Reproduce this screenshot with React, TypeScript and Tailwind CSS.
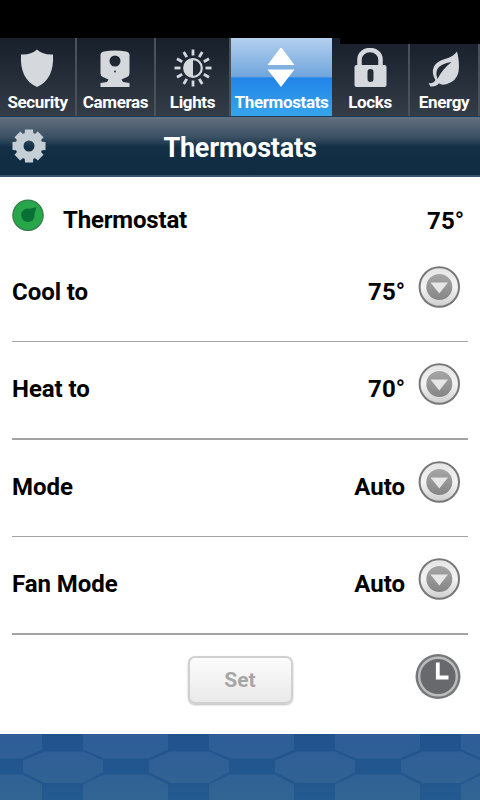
import type { ReactNode } from "react";

function ShieldIcon() {
  return (
    <svg className="h-10 w-10" viewBox="0 0 40 40">
      <path d="M19 1.500C15 5.500 9 7 3 6.500C2 22 7 34 19 39C31 34 36 22 35 6.500C29 7 23 5.500 19 1.500Z" fill="#d5d9dd" />
    </svg>
  );
}

function CameraIcon() {
  return (
    <svg className="h-10 w-10" viewBox="0 0 40 40">
      <path
        fillRule="evenodd"
        fill="#d5d9dd"
        d="M8 3.500Q19 1.500 30 3.500Q33.500 4 33.500 7V25Q33.500 28.500 30 29.500L25.500 31.500L27 34L33.500 35V39H4.500V35L11 34L12.500 31.500L8 29.500Q4.500 28.500 4.500 25V7Q4.500 4 8 3.500ZM19 7.500A5.500 5.500 0 1 0 19 18.500A5.500 5.500 0 1 0 19 7.500Z"
      />
      <circle cx="19" cy="23.500" r="1" fill="#2b323e" />
    </svg>
  );
}

function LightsIcon() {
  const angles = [0, 30, 60, 90, 120, 150, 180, 210, 240, 270, 300, 330];
  return (
    <svg className="h-10 w-10" viewBox="0 0 40 40">
      {angles.map((a) => (
        <path key={a} d="M20 1.500V7.500" stroke="#d5d9dd" strokeWidth="2.800" transform={`rotate(${a} 20 20)`} />
      ))}
      <circle cx="20" cy="20" r="8.800" fill="none" stroke="#d5d9dd" strokeWidth="2.200" />
      <path d="M20 11A9 9 0 0 0 20 29Z" fill="#d5d9dd" />
    </svg>
  );
}

function ThermostatsIcon() {
  return (
    <svg className="h-10 w-10" viewBox="0 0 40 40">
      <path d="M19 -1L32.500 17H5.500ZM5.500 21.500H32.500L19 39Z" fill="#fff" />
    </svg>
  );
}

function LockIcon() {
  return (
    <svg className="h-10 w-10" viewBox="0 0 40 40">
      <path d="M9.500 19V11.500A10.500 9.500 0 0 1 30.500 11.500V19" fill="none" stroke="#d5d9dd" strokeWidth="4.500" />
      <path
        fillRule="evenodd"
        fill="#d5d9dd"
        d="M6.500 17H34.500Q36.500 17 36.500 19V37Q36.500 39 34.500 39H6.500Q4.500 39 4.500 37V19Q4.500 17 6.500 17ZM20.500 21Q17.500 21 17.500 24V31Q17.500 34 20.500 34Q23.500 34 23.500 31V24Q23.500 21 20.500 21Z"
      />
    </svg>
  );
}

function LeafIcon() {
  return (
    <svg className="h-10 w-10" viewBox="0 0 40 40">
      <path
        fillRule="evenodd"
        fill="#d5d9dd"
        d="M33 3.500Q36 15 34.500 24Q32.500 33 23 36Q18 37.500 15 35.500Q12 39 6.500 38.500L4.500 35Q9 36 11.500 32Q7 25 10 18.500Q13 13 21 11Q29 9 33 3.500ZM27.500 14Q17 15.500 13.500 21Q11.300 25 13.500 31Q18 21.500 27.500 14Z"
      />
    </svg>
  );
}

function GearIcon() {
  const teeth = [0, 45, 90, 135, 180, 225, 270, 315];
  return (
    <svg className="h-[34px] w-[34px]" viewBox="0 0 34 34">
      {teeth.map((a) => (
        <path key={a} d="M12.500 7L13 .5H21L21.500 7Z" fill="#c5ced5" transform={`rotate(${a} 17 17)`} />
      ))}
      <circle cx="17" cy="17" r="9.500" fill="none" stroke="#c5ced5" strokeWidth="8" />
    </svg>
  );
}

function StatusIcon() {
  return (
    <svg className="h-8 w-8" viewBox="0 0 32 32">
      <circle cx="16" cy="16.300" r="15.200" fill="#27a64a" stroke="#397b4d" strokeWidth="1.200" />
      <path d="M24.500 8L22.500 14.500A6.800 6.800 0 1 1 18 9.800Z" fill="#087036" />
    </svg>
  );
}

function DropIcon() {
  return (
    <svg className="h-[42px] w-[42px]" viewBox="0 0 42 42">
      <defs>
        <linearGradient id="knobRim" x1="0" y1="0" x2="0" y2="1">
          <stop offset="0" stopColor="#e4e4e4" />
          <stop offset=".5" stopColor="#f3f3f3" />
          <stop offset="1" stopColor="#cecece" />
        </linearGradient>
        <linearGradient id="knobFace" x1="0" y1="0" x2="0" y2="1">
          <stop offset="0" stopColor="#a5a5a5" />
          <stop offset=".5" stopColor="#969696" />
          <stop offset="1" stopColor="#858585" />
        </linearGradient>
      </defs>
      <circle cx="21.300" cy="21" r="19.700" fill="url(#knobRim)" stroke="#777" strokeWidth="2" />
      <circle cx="21.300" cy="21" r="13" fill="url(#knobFace)" />
      <path d="M12.500 16.500H30L21.300 27.500Z" fill="#e6e6e6" />
    </svg>
  );
}

function ClockIcon() {
  return (
    <svg className="h-[46px] w-[46px]" viewBox="0 0 46 46">
      <circle cx="23" cy="22.500" r="22.500" fill="#77787b" />
      <circle cx="23" cy="22.500" r="18.800" fill="#68696c" stroke="#bcbcbd" strokeWidth="2.400" />
      <path d="M22.800 8.500V23.500H33.500" fill="none" stroke="#fff" strokeWidth="3.800" />
    </svg>
  );
}

function Tab({ width, label, active, children }: { width: string; label: string; active?: boolean; children: ReactNode }) {
  return (
    <div
      className={`${width} flex shrink-0 flex-col items-center pt-[10px] ${
        active
          ? "bg-[linear-gradient(#b4d0ef_0%,#6fa5dc_50%,#2184e8_51%,#36a5ec_100%)]"
          : "border-r-2 border-[#4b5159] bg-linear-to-b from-[#171f2b] to-[#343c48]"
      }`}
    >
      {children}
      <span className="mt-[3px] text-[17px] leading-[22px] font-bold tracking-[-0.36px] whitespace-nowrap text-white">{label}</span>
    </div>
  );
}

function Row({ label, value, thick }: { label: string; value: string; thick?: boolean }) {
  return (
    <div className={`flex shrink-0 items-start border-[#a3a3a3] ${thick ? "h-[98px] border-b-2" : "h-[97px] border-b"}`}>
      <span className="mt-8 flex-1 text-[24px] leading-[30px] tracking-[-0.05px]">{label}</span>
      <span className="mt-8 mr-[13px] text-[24px] leading-[30px]">{value}</span>
      <span className="mt-[21px] mr-[8px]">
        <DropIcon />
      </span>
    </div>
  );
}

function Pattern() {
  return (
    <svg className="block h-[66px] w-[480px]" viewBox="0 0 480 66">
      <defs>
        <linearGradient id="base" x1="0" y1="0" x2="0" y2="1">
          <stop offset="0" stopColor="#21528e" />
          <stop offset="1" stopColor="#235a8f" />
        </linearGradient>
        <linearGradient id="cells" gradientUnits="userSpaceOnUse" x1="0" y1="0" x2="0" y2="66">
          <stop offset="0" stopColor="#2e5d98" />
          <stop offset="1" stopColor="#326493" />
        </linearGradient>
      </defs>
      <rect width="480" height="66" fill="url(#base)" />
      {[23, 149, 275, 401].map((x) => (
        <path key={x} d={`M${x + 22} 17.500H${x + 60}L${x + 80} 26.500V38L${x + 60} 49H${x + 22}L${x} 38V26.500Z`} fill="url(#cells)" />
      ))}
      {[-43, 83, 209, 335, 461].map((x) => (
        <path key={x} d={`M${x} 0H${x + 85}V15.500L${x + 65} 24.500H${x + 21}L${x} 15.500ZM${x} 66V50.500L${x + 21} 40.500H${x + 65}L${x + 85} 50.500V66Z`} fill="url(#cells)" />
      ))}
    </svg>
  );
}

export default function App() {
  return (
    <div className="flex h-[800px] w-[480px] flex-col overflow-hidden bg-white font-[Roboto,sans-serif] font-bold text-black">
      <div className="h-[38px] shrink-0 bg-black" />
      <nav className="relative flex h-[78px] shrink-0">
        <Tab width="w-[77px]" label="Security"><ShieldIcon /></Tab>
        <Tab width="w-[79px]" label="Cameras"><CameraIcon /></Tab>
        <Tab width="w-[75px]" label="Lights"><LightsIcon /></Tab>
        <Tab width="w-[101px]" label="Thermostats" active><ThermostatsIcon /></Tab>
        <Tab width="w-[78px]" label="Locks"><LockIcon /></Tab>
        <Tab width="w-[70px]" label="Energy"><LeafIcon /></Tab>
        <div className="absolute top-0 right-0 h-[6px] w-[140px] bg-black" />
      </nav>
      <header className="grid h-[61px] shrink-0 grid-cols-[1fr_auto_1fr] items-center border-t border-b-2 border-t-[#173b58] border-b-[#38536a] bg-[linear-gradient(#637180_0%,#3a4f62_35%,#122f45_52%,#0f2c42_100%)] px-3">
        <GearIcon />
        <h1 className="pt-[3px] text-[27px] leading-[32px] tracking-[-0.2px] text-white">Thermostats</h1>
      </header>
      <main className="flex h-[557px] shrink-0 flex-col px-3">
        <div className="flex h-[68px] shrink-0 items-start pt-[22px] text-[24px] leading-[42px]">
          <StatusIcon />
          <span className="ml-[19px] flex-1 tracking-[-0.18px]">Thermostat</span>
          <span className="mt-px mr-[4px]">75°</span>
        </div>
        <Row label="Cool to" value="75°" />
        <Row label="Heat to" value="70°" thick />
        <Row label="Mode" value="Auto" />
        <Row label="Fan Mode" value="Auto" thick />
        <div className="grid grid-cols-[1fr_auto_1fr] items-start pt-[19px]">
          <button className="col-start-2 mt-[2px] h-[48px] w-[105px] rounded-[7px] border-2 border-[#d0d0d0] bg-linear-to-b from-[#fcfcfc] to-[#e9e9e9] pt-[2px] text-[21px] text-[#a6a6a6] shadow-[0_1px_2px_#bbb]">
            Set
          </button>
          <span className="mr-[7px] justify-self-end"><ClockIcon /></span>
        </div>
      </main>
      <footer className="h-[66px] shrink-0"><Pattern /></footer>
    </div>
  );
}
